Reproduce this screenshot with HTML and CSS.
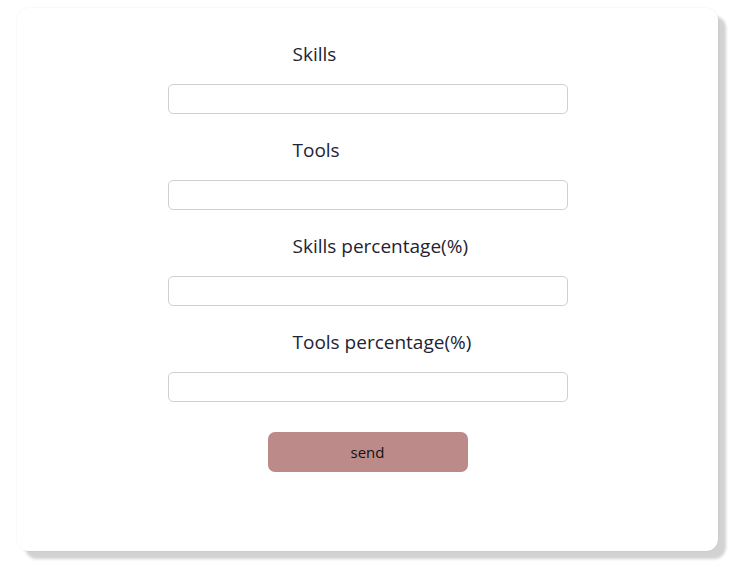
FILE: index.html
```html
<!DOCTYPE html>
<html lang="en">
<head>
<meta charset="utf-8">
<title>Skills form</title>
<link rel="stylesheet" href="styles.css">
</head>
<body>
<div class="page">
  <div class="card">
    <form class="form">
      <div class="group">
        <label class="label" for="skills">Skills</label>
        <input class="input" id="skills" type="text">
      </div>
      <div class="group">
        <label class="label" for="tools">Tools</label>
        <input class="input" id="tools" type="text">
      </div>
      <div class="group">
        <label class="label" for="skillsp">Skills percentage(%)</label>
        <input class="input" id="skillsp" type="text">
      </div>
      <div class="group">
        <label class="label" for="toolsp">Tools percentage(%)</label>
        <input class="input" id="toolsp" type="text">
      </div>
      <button class="send" type="button">send</button>
    </form>
  </div>
</div>
</body>
</html>
```
FILE: styles.css
```css
html, body {
  margin: 0;
  padding: 0;
  background: #ffffff;
}
body {
  font-family: "Open Sans", "Noto Sans", sans-serif;
  color: #1e2433;
}
.page {
  box-sizing: border-box;
  width: 732px;
  height: 569px;
  padding: 8px 0 0 17px;
}
.card {
  box-sizing: border-box;
  width: 701px;
  height: 543px;
  background: #ffffff;
  border-radius: 12px;
  box-shadow: 0 0 2px rgba(0,0,0,0.08), 8px 8px 3px #d2d2d2;
  padding-top: 32px;
}
.form {
  width: 400px;
  margin: 0 auto;
  display: flex;
  flex-direction: column;
}
.group {
  display: flex;
  flex-direction: column;
  padding-bottom: 22px;
}
.label {
  display: block;
  padding-left: 125px;
  font-size: 19px;
  line-height: 28px;
  margin-bottom: 16px;
}
.input {
  box-sizing: border-box;
  width: 400px;
  height: 30px;
  margin: 0;
  border: 1px solid #d0d0d0;
  border-radius: 5px;
  background: #fff;
  outline: none;
}
.send {
  align-self: center;
  margin-top: 8px;
  width: 200px;
  height: 40px;
  border: none;
  border-radius: 7px;
  background: #bc8b89;
  color: #111;
  font-family: "Open Sans", "Noto Sans", sans-serif;
  font-size: 15px;
  cursor: pointer;
}
```
